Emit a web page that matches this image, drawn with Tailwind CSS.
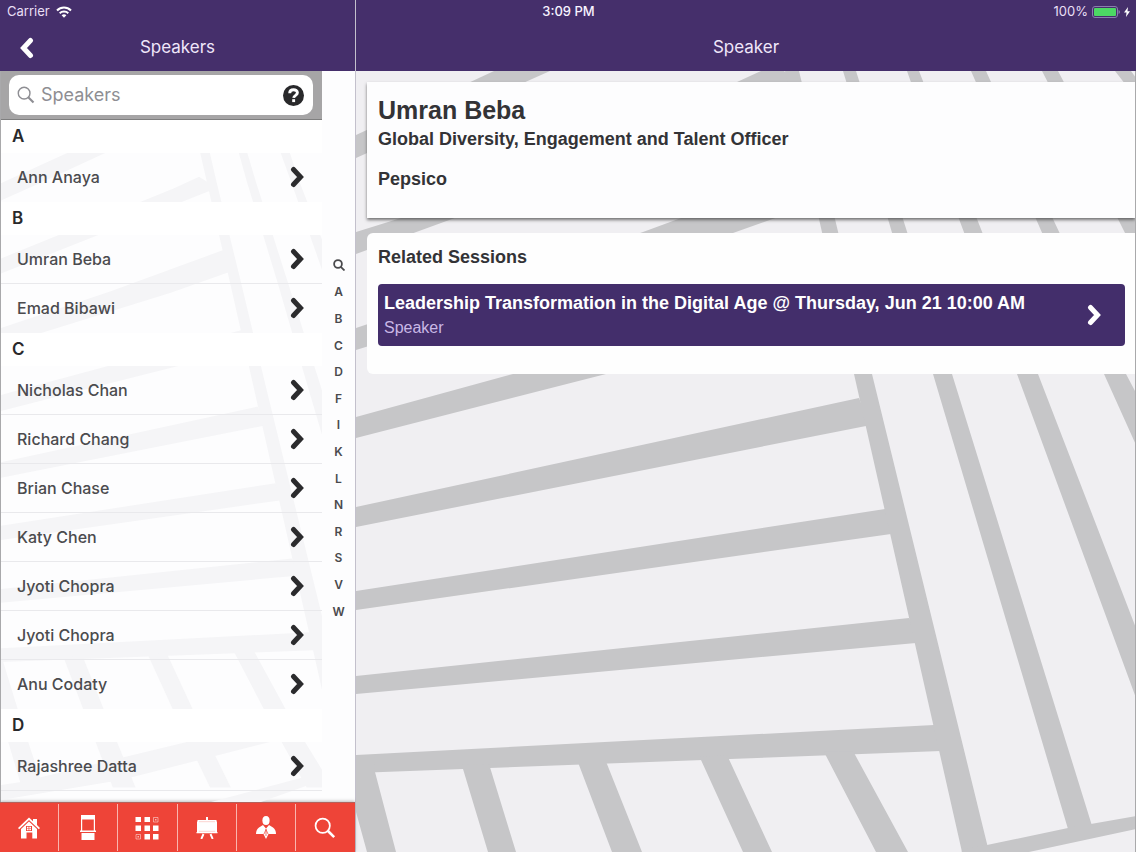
<!DOCTYPE html>
<html lang="en">
<head>
  <meta charset="utf-8">
  <meta name="viewport" content="width=device-width, initial-scale=1.0">
  <title>Speakers</title>
  <script src="https://cdn.jsdelivr.net/npm/@tailwindcss/browser@4"></script>
</head>
<body class="bg-[#f0eff2] font-[Inter,sans-serif] text-[#333336]">

<!-- shared shapes -->
<svg class="hidden">
  <defs>
    <g id="road-lines">
      <!-- bars running into the long diagonal -->
      <path d="M356 135L494 71L590 27H645L550 71L356 158Z"/>
      <path d="M356 232L401 218L737 82L774 65L800 81L452 219L356 254Z"/>
      <path d="M356 328L643 232L812 170L820 202L733 233L356 350Z"/>
      <path d="M356 417L513 374L836 287L843 314L606 374L356 438Z"/>
      <path d="M356 507L859 398L870 425L866 426L356 527Z"/>
      <path d="M356 591L885 509L897 533L891 534L356 610Z"/>
      <path d="M356 676L909 618L922 642L916 643L356 694Z"/>
      <path d="M356 755L934 725L948 751L941 751L356 773Z"/>
      <!-- long diagonals -->
      <path d="M771 10L785 71L819 219L854 374L962 852L989 852L872 374L835 219L799 71L785 10Z"/>
      <path d="M826 10L843 71L888 219L933 374L1068 829H1093L952 374L903 219L856 71L838 10Z"/>
      <path d="M885 10L907 71L959 219L1017 374L1136 698V628L1038 374L977 219L919 71L899 10Z"/>
      <path d="M945 10L971 71L1036 219L1104 374L1136 445V393L1126 374L1053 219L986 71L961 10Z"/>
      <path d="M1015 10L1042 71L1118 219L1136 255V219L1058 71L1030 10Z"/>
      <path d="M1088 10L1115 71L1136 98V78L1131 71L1105 10Z"/>
      <!-- lower streets -->
      <path d="M340 755H374L375 772L396 852L420 950H390L367 852L356 812Z"/>
      <path d="M462 765L463 769L488 852L517 950H548L516 852L489 764Z"/>
      <path d="M578 762L579 765L612 852L649 950H682L642 852L605 759Z"/>
      <path d="M700 757L701 760L743 852L790 950H820L772 852L727 755Z"/>
      <path d="M824 752L876 852L930 950H968L908 852L853 751Z"/>
      <path d="M962 850L987 845L1068 828L1136 816V829L1029 852L960 868Z"/>
    </g>
    <symbol id="chevron" viewBox="0 0 14 22">
      <path d="M3.500 3.500L10.500 11L3.500 18.500" fill="none" stroke="currentColor" stroke-width="5" stroke-linecap="round"/>
    </symbol>
    <symbol id="glass" viewBox="0 0 24 24">
      <circle cx="9.500" cy="9.500" r="7.800" fill="none" stroke="currentColor" stroke-width="1.900"/>
      <path d="M15 15L22 22" fill="none" stroke="currentColor" stroke-width="2.800"/>
    </symbol>
  </defs>
</svg>

<div class="relative flex h-screen overflow-hidden">

  <!-- status bar -->
  <div class="absolute inset-x-0 top-0 z-10 grid h-6 grid-cols-3 items-center pr-1.5 pl-[7px] text-[13px] text-[#e9dff5]">
    <div class="flex items-center gap-1.5">
      <span>Carrier</span>
      <svg class="h-3 w-4" viewBox="0 0 16 12" fill="none" stroke="white" stroke-width="2">
        <path d="M1 4.500C5 .500 11 .500 15 4.500"/>
        <path d="M3.700 7.200C6 5 10 5 12.300 7.200"/>
        <path d="M8 11.700L5.600 9.200C7 8 9 8 10.400 9.200Z" fill="white" stroke="none"/>
      </svg>
    </div>
    <div class="text-center font-medium text-[#f8f3ff]">3:09 PM</div>
    <div class="flex items-center justify-end gap-1">
      <span>100%</span>
      <svg class="h-3 w-7" viewBox="0 0 28 12">
        <rect x=".500" y=".500" width="25" height="11" rx="2.500" fill="none" stroke="#8b7fae"/>
        <rect x="2" y="2" width="22" height="8" rx="1" fill="#4cd964"/>
        <path d="M26.500 4V8Q28 7.500 28 6T26.500 4Z" fill="#8b7fae"/>
      </svg>
      <svg class="h-2.5 w-1.5" viewBox="0 0 6 10"><path d="M4 0L0 5.500H2.500L2 10L6 4.300H3.500Z" fill="white"/></svg>
    </div>
  </div>

  <!-- speaker list -->
  <aside class="flex w-[356px] shrink-0 flex-col border-r border-[#c3c0cc] bg-[#fdfdfe]">
    <header class="grid h-[71px] shrink-0 grid-cols-[53px_1fr_53px] items-center bg-[#452f6b] pt-6 text-[#efe6fa]">
      <button class="flex justify-center text-white" aria-label="Back">
        <svg class="h-[22px] w-3.5 rotate-180"><use href="#chevron"/></svg>
      </button>
      <h1 class="text-center text-[17px]">Speakers</h1>
    </header>

    <div class="flex min-h-0 flex-1 border-l border-[#a9a9ab]">
      <div class="flex min-w-0 flex-1 flex-col">
        <form class="h-[49px] shrink-0 border-b border-[#7f7f7f] bg-[#a6a5a6] pt-1 pr-[9px] pl-2">
          <div class="flex h-10 items-center gap-1.5 rounded-[10px] bg-white px-2">
            <svg class="size-[18px] text-[#8e8e93]"><use href="#glass"/></svg>
            <input id="search" type="text" placeholder="Speakers" aria-label="Search speakers" class="min-w-0 flex-1 text-lg outline-none placeholder:text-[#8e8e93]">
            <button type="button" class="mr-px" aria-label="Help">
              <svg class="size-[21px]" viewBox="0 0 21 21">
                <circle cx="10.500" cy="10.500" r="10.500" fill="#29292b"/>
                <path d="M6.700 8.200C6.700 3.600 14.400 3.700 14.400 7.800C14.400 10.400 11 10.200 10.700 12.800" fill="none" stroke="white" stroke-width="2.900"/>
                <rect x="9.200" y="14.200" width="2.900" height="2.900" fill="white"/>
              </svg>
            </button>
          </div>
        </form>
        <div class="relative min-h-0 flex-1 overflow-hidden">
          <svg class="absolute inset-0 size-full" viewBox="0 120 322 682" preserveAspectRatio="xMinYMin slice" fill="#f5f5f7">
            <use href="#road-lines" transform="translate(-336 132) scale(.69)"/>
            <path d="M0 800V785L20 782L190 741H273L120 780Z"/>
            <path d="M210 802L322 772V780L260 802Z"/>
          </svg>
          <div id="speakers" class="relative"></div>
        </div>
      </div>
      <nav class="flex w-[33px] shrink-0 flex-col items-center pt-[180px] text-xs font-semibold text-[#4a4a4d]" aria-label="Index">
        <a href="#search" class="flex h-7 items-center" aria-label="Search">
          <svg class="size-3" viewBox="0 0 12 12" fill="none" stroke="currentColor" stroke-width="1.800"><circle cx="5" cy="5" r="3.900"/><path d="M7.800 7.800L11.500 11.500"/></svg>
        </a>
        <div id="letters" class="flex h-[346px] flex-col text-center"></div>
      </nav>
    </div>

    <!-- tab bar -->
    <nav class="grid h-[50px] shrink-0 grid-cols-6 items-stretch divide-x divide-[#f9b5ae] border-t border-[#b5605a] bg-[#ee4438] py-px text-white shadow-[0_-1px_3px_#8888]">
      <a href="#" class="flex items-center justify-center" aria-label="Home">
        <svg class="h-[22px] w-[22px]" viewBox="0 0 22 22" fill="currentColor">
          <path d="M0 11L11 .500L15 4.300V2H19V8L22 11L20.800 12.200L11 3L1.200 12.200Z"/>
          <path fill-rule="evenodd" d="M3 12L11 4.500L19 12V21.500H14.300V15.500H8.500V21.500H3ZM8 9V14H14V9Z"/>
          <path d="M8.900 9.800H10.600V11.200H8.900ZM11.300 9.800H13V11.200H11.300ZM8.900 11.800H10.600V13.200H8.900ZM11.300 11.800H13V13.200H11.300Z"/>
        </svg>
      </a>
      <a href="#" class="flex items-center justify-center" aria-label="Kiosk">
        <svg class="h-[25px] w-4" viewBox="0 0 16 25" fill="currentColor">
          <path fill-rule="evenodd" d="M1 0H15V15.500H16V17H0V15.500H1ZM2.200 4.500V15.500H13.800V4.500Z"/>
          <path d="M1.500 18H14.500V25H1.500Z"/>
        </svg>
      </a>
      <a href="#" class="flex items-center justify-center" aria-label="Floor plan">
        <svg class="size-6" viewBox="0 0 24 24" fill="currentColor">
          <path d="M.500 1H6V6H.500ZM9.500 1H15V6H9.500ZM.500 9.500H6V15H.500ZM9.500 9.500H15V15H9.500ZM18 9.500H23.500V15H18ZM9.500 18H15V23.500H9.500ZM18 18H23.500V23.500H18Z"/>
          <path d="M18.500 1.500H23V6H18.500ZM1 18.500H5.500V23H1Z" fill="none" stroke="currentColor" stroke-opacity=".6" stroke-width=".800"/>
          <path d="M20 3H21.500V4.500H20ZM2.500 20H4V21.500H2.500Z" fill-opacity=".6"/>
        </svg>
      </a>
      <a href="#" class="flex items-center justify-center" aria-label="Sessions">
        <svg class="h-[22px] w-[22px]" viewBox="0 0 22 22" fill="currentColor">
          <path d="M10 0H12V3H20.500V4.500H21V15H21.500V16.200H.500V15H1V4.500H1.500V3H10Z"/>
          <path d="M3 4.700H19M2.800 14.300H19.200" stroke="#ee4438" stroke-opacity=".4" stroke-width=".600"/>
          <path d="M7.500 17L5.300 22M14.500 17L16.700 22" stroke="currentColor" stroke-width="1.900"/>
        </svg>
      </a>
      <a href="#" class="flex items-center justify-center" aria-label="Speakers">
        <svg class="h-[23px] w-5" viewBox="0 0 20 23" fill="currentColor">
          <ellipse cx="10" cy="4.500" rx="3.600" ry="4.500"/>
          <path d="M7 9L9.500 12H10.500L13 9L17 11.500Q20 13.500 20 18H12.500L10 23L7.500 18H0Q0 13.500 3 11.500Z"/>
          <path d="M10 12.500V20M8 18L10 13.500L12 18" fill="none" stroke="#ee4438" stroke-width=".700"/>
        </svg>
      </a>
      <a href="#" class="flex items-center justify-center" aria-label="Search">
        <svg class="size-[22px]"><use href="#glass"/></svg>
      </a>
    </nav>
  </aside>

  <!-- speaker detail -->
  <main class="flex min-w-0 flex-1 flex-col">
    <header class="flex h-[71px] shrink-0 items-center justify-center bg-[#452f6b] pt-6">
      <h2 class="text-[17px] text-[#efe6fa]">Speaker</h2>
    </header>
    <div class="relative min-h-0 flex-1 overflow-hidden border-r border-[#a9a9ab] font-['Liberation_Sans',sans-serif]">
      <svg class="absolute inset-0 size-full" viewBox="356 71 780 781" preserveAspectRatio="xMinYMin slice" fill="#c6c6c8">
        <use href="#road-lines"/>
      </svg>
      <div class="relative flex flex-col gap-[15px] pt-[11px] pl-[11px]">
        <section class="h-[136px] bg-[#fdfdfe] px-[11px] pt-3 shadow-[0_2px_3px_#444b]">
          <h3 class="text-[25px] leading-8 font-bold">Umran Beba</h3>
          <p class="text-lg leading-[26px] font-bold">Global Diversity, Engagement and Talent Officer</p>
          <p class="mt-3.5 text-lg leading-[26px] font-bold">Pepsico</p>
        </section>
        <section class="h-[141px] rounded-l-md bg-[#fefefe] pt-2.5 pr-2.5 pl-[11px]">
          <h3 class="text-lg leading-7 font-bold">Related Sessions</h3>
          <a href="#" class="mt-[13px] flex h-[62px] items-center justify-between rounded bg-[#432e6b] pr-6 pl-1.5 text-white">
            <span class="flex flex-col">
              <span class="text-lg leading-[26px] font-bold">Leadership Transformation in the Digital Age @ Thursday, Jun 21 10:00 AM</span>
              <span class="text-base leading-6 text-[#c9b8e6]">Speaker</span>
            </span>
            <svg class="h-[22px] w-3.5"><use href="#chevron"/></svg>
          </a>
        </section>
      </div>
    </div>
  </main>
</div>

<script>
  const groups = {
    A: ['Ann Anaya'],
    B: ['Umran Beba', 'Emad Bibawi'],
    C: ['Nicholas Chan', 'Richard Chang', 'Brian Chase', 'Katy Chen', 'Jyoti Chopra', 'Jyoti Chopra', 'Anu Codaty'],
    D: ['Rajashree Datta']
  }
  const speakers = document.getElementById('speakers')
  Object.keys(groups).forEach(letter => {
    const rows = groups[letter].map(name => `
      <li class="border-b border-[#e9e9ec] ${letter === 'D' ? '' : 'last:border-transparent'}">
        <a href="#" class="flex h-12 items-center justify-between pr-[18px] pl-4 text-base font-medium text-[#4b4b4e]">
          ${name}
          <svg class="h-[22px] w-3.5 text-[#2b2b2d]"><use href="#chevron"/></svg>
        </a>
      </li>`).join('')
    speakers.innerHTML += `
      <h2 id="group-${letter}" class="h-[33px] bg-white pl-[11px] text-[17px] leading-[33px] font-semibold text-[#29292b]">${letter}</h2>
      <ul>${rows}</ul>`
  })

  const letters = document.getElementById('letters')
  'ABCDFIKLNRSVW'.split('').forEach(letter => {
    letters.innerHTML += `<a href="#group-${letter}" class="flex flex-1 items-center justify-center">${letter}</a>`
  })
</script>
</body>
</html>
